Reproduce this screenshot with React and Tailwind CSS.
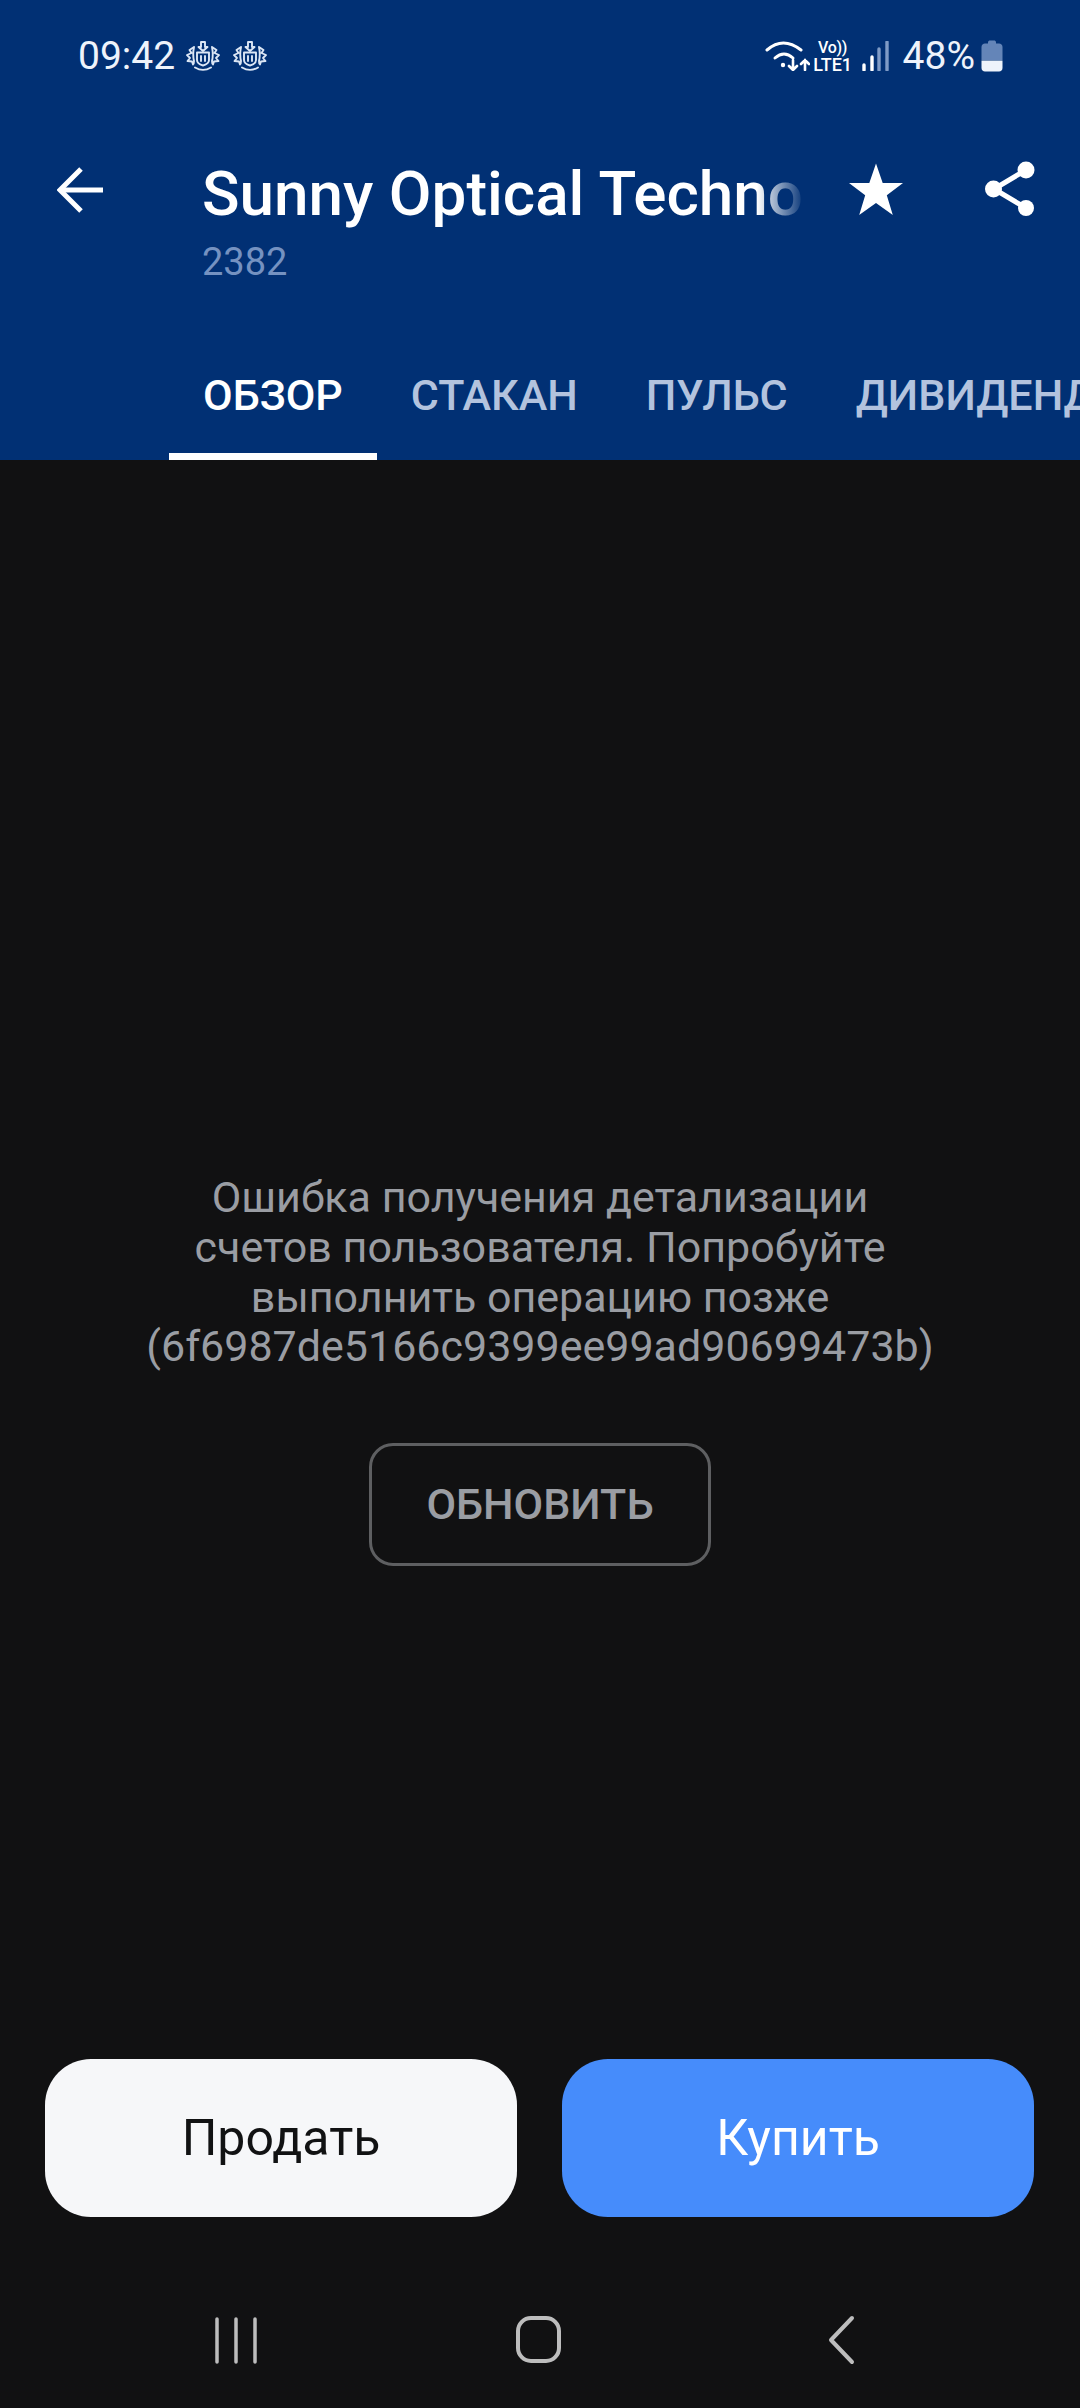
import React from "react";

function Crest() {
  return (
    <svg width="36" height="30" viewBox="0 0 36 30" fill="none" stroke="#dbe6f5" strokeWidth="1.900" strokeLinejoin="round" strokeLinecap="round">
      <path d="M16 1h4v5h2.500L18 10l-4.500-4H16z" />
      <path d="M12 11.500h12V19c0 2.500-2.500 4.500-6 5.500-3.500-1-6-3-6-5.500z" />
      <path d="M16 15v5M20 15v5" />
      <path d="M9 6 4.500 9 6.500 12 2 14l3 3-2.500 3 4.500.5L8 23.500c1-.5 1-2 1-3.500-1-4-1-9 0-14z" />
      <path d="M27 6l4.500 3-2 3L34 14l-3 3 2.500 3-4.500.5-1 3c-1-.5-1-2-1-3.500 1-4 1-9 0-14z" />
      <path d="M10 26.500c5 3 11 3 16 0" />
    </svg>
  );
}

function Wifi() {
  return (
    <svg width="48" height="30" viewBox="0 0 48 30" fill="none" stroke="#ffffff" strokeLinecap="round" className="block">
      <path d="M5 9Q21-5 39 9" strokeWidth="3" />
      <path d="M13 17Q22 9 31 17" strokeWidth="3" />
      <circle cx="21" cy="24" r="2.200" fill="#fff" stroke="none" />
      <path d="M31 19v10M27 25l4 4 4-4" strokeWidth="2.600" />
      <path d="M43 29V19M39 23l4-4 4 4" strokeWidth="2.600" />
    </svg>
  );
}

function Signal() {
  return (
    <svg width="28" height="30" viewBox="0 0 28 30" className="block" strokeWidth="3.400" strokeLinecap="round">
      <path d="M3 24v5" stroke="#fff" />
      <path d="M11 16v13" stroke="#fff" />
      <path d="M18 8v21" stroke="#7f9bc6" />
      <path d="M26 1v28" stroke="#7f9bc6" />
    </svg>
  );
}

function Battery() {
  return (
    <svg width="22" height="32" viewBox="0 0 22 32" className="block">
      <path d="M7 2.500C7 1 8 .5 9 .5h4c1 0 2 .5 2 2v1h3c2 0 3.500 1.500 3.500 3.500V20H.5V7C.5 5 2 3.500 4 3.500h3z" fill="#6485b8" />
      <path d="M.5 20.500h21V28c0 2-1.500 3.500-3.500 3.500H4C2 31.500.5 30 .5 28z" fill="#eef3fb" />
    </svg>
  );
}

function Tab({ label, active }) {
  return (
    <div className={`relative shrink-0 px-[34px] h-full flex items-center text-[43px] font-medium leading-none ${active ? "text-white" : "text-[#b3c3de]"}`}>
      {label}
      {active && <div className="absolute left-0 right-0 bottom-0 h-[7px] bg-white" />}
    </div>
  );
}

export default function App() {
  return (
    <div className="w-[1080px] h-[2408px] flex flex-col bg-[#111112] overflow-hidden font-['Roboto',sans-serif]">
      <header className="h-[460px] shrink-0 flex flex-col bg-[#013074]">
        <div className="h-[112px] shrink-0 flex items-center pl-[78px] pr-[77px] text-[#eef3fb]">
          <span className="text-[39px] leading-none">09:42</span>
          <div className="ml-[10px] flex gap-[11px]">
            <Crest />
            <Crest />
          </div>
          <div className="ml-auto flex items-center">
            <Wifi />
            <div className="ml-[3px] w-[40px] flex flex-col items-center font-medium text-white leading-none">
              <span className="text-[16px] leading-[16px] tracking-[-0.3px]">Vo))</span>
              <span className="text-[18px] leading-[17px]">LTE1</span>
            </div>
            <div className="ml-[8px]"><Signal /></div>
            <span className="ml-[14px] text-[39px] leading-none">48%</span>
            <div className="ml-[6px]"><Battery /></div>
          </div>
        </div>

        <div className="h-[218px] shrink-0 pt-[48px] flex items-start">
          <div className="w-[202px] shrink-0 pl-[57px] pt-[7px]">
            <svg width="46" height="46" viewBox="0 0 46 46" fill="none" stroke="#fff" strokeWidth="5" className="block">
              <path d="M46 23H4" />
              <path d="M24 2 3 23l21 21" />
            </svg>
          </div>
          <div className="w-[603px] shrink-0 flex flex-col">
            <div className="relative h-[68px] overflow-hidden whitespace-nowrap text-[62px] leading-[68px] font-medium text-white">
              Sunny Optical Technology
              <div className="absolute right-0 top-0 bottom-0 w-[48px] bg-gradient-to-r from-transparent to-[#013074]" />
            </div>
            <div className="mt-[14px] text-[38px] leading-[40px] text-[#7592c1]">2382</div>
          </div>
          <div className="flex-1 relative">
            <svg width="56" height="56" viewBox="0 0 56 56" className="absolute left-[43px] top-[2px]" fill="#fff">
              <path d="M28 1.500 34.700 21H55L38.800 33.300 44.800 53 28 41 11.200 53 17.200 33.300 1 21H21.300z" />
            </svg>
            <svg width="54" height="58" viewBox="0 0 54 58" className="absolute left-[179px] top-[0px]" fill="#fff" stroke="#fff">
              <path d="M42 10 10 29l32 19" fill="none" strokeWidth="5" />
              <circle cx="42" cy="10" r="8.500" stroke="none" />
              <circle cx="42" cy="48" r="8" stroke="none" />
              <circle cx="9.500" cy="29" r="8.500" stroke="none" />
            </svg>
          </div>
        </div>

        <nav className="flex-1 pl-[169px] flex overflow-hidden items-stretch min-h-0">
          <Tab label="ОБЗОР" active />
          <Tab label="СТАКАН" />
          <Tab label="ПУЛЬС" />
          <Tab label="ДИВИДЕНДЫ" />
        </nav>
      </header>

      <main className="flex-1 flex flex-col items-center pt-[713px]">
        <p className="w-[820px] text-center text-[43px] leading-[49.8px] text-[#9a9da3]">
          Ошибка получения детализации<br />
          счетов пользователя. Попробуйте<br />
          выполнить операцию позже<br />
          (6f6987de5166c9399ee99ad90699473b)
        </p>
        <button className="mt-[71px] w-[342px] h-[123px] rounded-[24px] border-[3px] border-[#5e5f61] text-[43px] font-medium text-[#9a9da3] leading-none">
          ОБНОВИТЬ
        </button>
      </main>

      <div className="shrink-0 pl-[45px] pr-[46px] flex gap-[45px]">
        <button className="flex-1 h-[158px] rounded-[46px] bg-[#f6f7f9] text-[#111213] text-[50px] leading-none">Продать</button>
        <button className="flex-1 h-[158px] rounded-[46px] bg-[#468cfb] text-white text-[50px] leading-none">Купить</button>
      </div>

      <div className="h-[191px] shrink-0">
        <svg width="1080" height="191" viewBox="0 0 1080 191" fill="none" stroke="#bdbdbd" strokeLinecap="round" className="block">
          <path d="M217 102v43M236 102v43M255 102v43" strokeWidth="3.500" />
          <rect x="518" y="101" width="41" height="43" rx="13" strokeWidth="4" />
          <path d="M852 101 831 123l21 22" strokeWidth="4" strokeLinejoin="round" />
        </svg>
      </div>
    </div>
  );
}
